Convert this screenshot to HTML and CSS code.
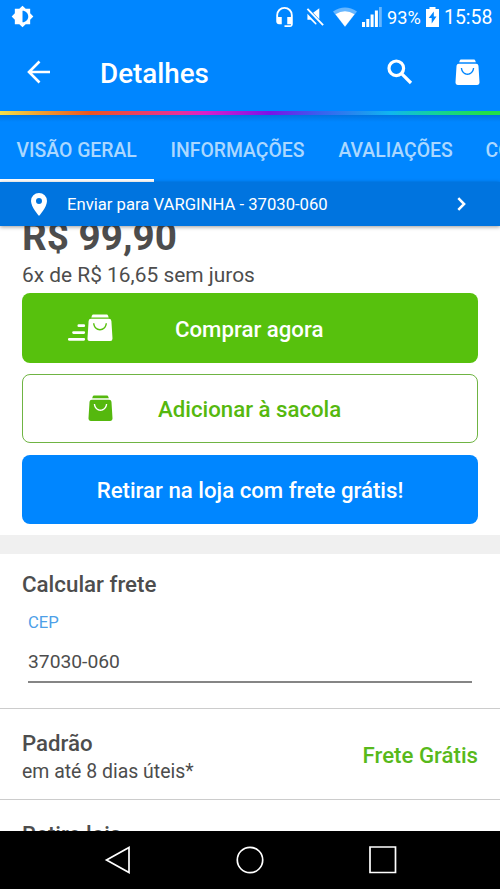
FILE: index.html
```html
<!DOCTYPE html>
<html lang="pt-BR">
<head>
<meta charset="utf-8">
<title>Detalhes</title>
<link rel="stylesheet" href="styles.css">
</head>
<body>
<svg class="defs" width="0" height="0">
  <symbol id="bag" viewBox="0 0 26 28">
    <path d="M4.300 3.400 5 1.400Q5.300.6 6.200.6h13.600Q20.700.6 21 1.400l.7 2z"/>
    <path fill-rule="evenodd" d="M4 4.800h18q2.200 0 2.400 2.200l1.100 17.500q.1 2.500-2.300 2.500H2.800q-2.400 0-2.300-2.500L1.600 7Q1.800 4.800 4 4.800zM6 9.300c.4 4.500 3.400 7.200 7 7.200s6.600-2.700 7-7.200h-1.400c-.4 3.600-2.700 5.700-5.600 5.700s-5.200-2.100-5.600-5.700z"/>
  </symbol>
</svg>
<div class="screen">
  <div class="status">
    <svg class="brightness" viewBox="0 0 24 24"><path fill-rule="evenodd" d="M20 15.310 23.310 12 20 8.690V4h-4.690L12 .69 8.690 4H4v4.690L.69 12 4 15.310V20h4.690L12 23.310 15.310 20H20v-4.690zM12 18V6c3.310 0 6 2.690 6 6s-2.690 6-6 6z"/></svg>
    <svg class="headset" viewBox="0 0 24 24"><path d="M12 1a9 9 0 0 0-9 9v7c0 1.660 1.340 3 3 3h3v-8H5v-2a7 7 0 0 1 14 0v2h-4v8h4v1h-7v2h6c1.660 0 3-1.340 3-3V10a9 9 0 0 0-9-9z"/></svg>
    <svg class="mute" viewBox="0 0 20 20"><path d="M1.500 6.500 11 16.600v.9l-1 .5-5-5H1.500zM7.500 5.500 14 .8v11.600z"/><path d="m1.500 1.500 16.500 17" class="slash"/></svg>
    <svg class="wifi" viewBox="0 0 24 20"><path d="M0 4.600Q12-3.800 24 4.600L12 20z" opacity=".4"/><path d="M2.500 7.300Q12 1.200 21.500 7.300L12 19.600z"/></svg>
    <svg class="signal" viewBox="0 0 20 20"><path d="M0 15h3v5H0zM4.300 12h3v8h-3zM8.600 7.500h3V20h-3zM12.900 3.500h3V20h-3z"/><path d="M17 0h2.800v20H17z" opacity=".4"/></svg>
    <span class="percent">93%</span>
    <svg class="battery" viewBox="0 0 13 20"><path fill-rule="evenodd" d="M3.500 0h6v2H13v18H0V2h3.500zM7.800 4.500 2.700 11h3v5.500l4.800-7H7.800z"/></svg>
    <span class="clock">15:58</span>
  </div>
  <div class="appbar">
    <svg class="back" viewBox="0 0 24 24"><path d="M12.500 1.500 2 12l10.500 10.500M2 12h21"/></svg>
    <h1>Detalhes</h1>
    <svg class="search" viewBox="0 0 26 26"><circle cx="9.300" cy="9.300" r="7.300"/><path d="m14.600 14.600 9.400 9.400"/></svg>
    <svg class="cart"><use href="#bag"/></svg>
  </div>
  <div class="rainbow"></div>
  <nav class="tabs">
    <span class="tab active">VISÃO GERAL</span><span class="tab info">INFORMAÇÕES</span><span class="tab rating">AVALIAÇÕES</span><span class="tab more">COMENTÁRIOS</span>
  </nav>
  <div class="ship">
    <svg class="pin" viewBox="0 0 16 23"><path fill-rule="evenodd" d="M8 0a8 8 0 0 0-8 8c0 6 8 15 8 15s8-9 8-15a8 8 0 0 0-8-8zm0 5a3 3 0 1 1 0 6 3 3 0 0 1 0-6z"/></svg>
    <span>Enviar para VARGINHA - 37030-060</span>
    <svg class="chevron" viewBox="0 0 9 14"><path d="m1.300 1.200 5.800 5.800-5.800 5.800"/></svg>
  </div>
  <main>
    <div class="price">R$ 99,90</div>
    <div class="installments">6x de R$ 16,65 sem juros</div>
    <div class="actions">
      <div class="button buy">
        <svg class="fast" viewBox="0 0 45 28"><path class="speed" d="M10.800 11.700h5M5.500 18.600h10.300M1.300 25.300h14.500"/><use href="#bag" x="19" y="0" width="26" height="28"/></svg>
        <span>Comprar agora</span>
      </div>
      <div class="button add">
        <svg class="addbag"><use href="#bag"/></svg>
        <span>Adicionar à sacola</span>
      </div>
      <div class="button pickup"><span>Retirar na loja com frete grátis!</span></div>
    </div>
    <section class="freight">
      <h2>Calcular frete</h2>
      <div class="field">
        <div class="label">CEP</div>
        <div class="value">37030-060</div>
      </div>
    </section>
    <div class="option">
      <div class="detail">
        <div class="name">Padrão</div>
        <div class="time">em até 8 dias úteis*</div>
      </div>
      <div class="free">Frete Grátis</div>
    </div>
    <div class="option next"><div class="name retire">Retire loja</div></div>
  </main>
  <footer>
    <svg viewBox="0 0 28 28"><path d="M25 1.500v25L2.500 14z"/></svg>
    <svg viewBox="0 0 28 28"><circle cx="14" cy="14" r="12.700"/></svg>
    <svg viewBox="0 0 28 28"><path d="M1 1h25.500v25.500H1z"/></svg>
  </footer>
</div>
</body>
</html>
```
FILE: styles.css
```css
* { box-sizing: border-box; }
body { margin: 0; font-family: Roboto, "Liberation Sans", sans-serif; color: #4d4d4d; background: #fff; }
h1, h2 { margin: 0; font-weight: 500; }
svg { display: block; flex: none; fill: currentColor; }
.defs { position: absolute; }
.screen { width: 500px; height: 889px; overflow: hidden; display: flex; flex-direction: column; white-space: nowrap; }
.screen > * { flex: none; }

.status { height: 34px; display: flex; align-items: center; background: #0086ff; color: #fff; padding-left: 11px; font-size: 19.440px; }
.brightness { width: 23px; height: 23px; margin-bottom: 1px; }
.headset { width: 23px; height: 22px; margin-left: 239px; margin-bottom: 1px; }
.mute { width: 19px; height: 20px; margin-left: 10px; }
.slash { fill: none; stroke: currentColor; stroke-width: 2; }
.wifi { width: 24px; height: 20px; margin-left: 8px; }
.signal { width: 20px; height: 20px; margin-left: 5px; }
.percent { margin-left: 5px; width: 34px; font-size: 18.200px; }
.battery { width: 13px; height: 20px; margin-left: 5px; }
.clock { margin-left: 5px; padding-top: 1px; }

.appbar { height: 77px; display: flex; align-items: center; background: #0086ff; color: #fff; padding-left: 27px; }
.appbar svg { margin-bottom: 1px; }
.back { width: 24px; height: 24px; fill: none; stroke: currentColor; stroke-width: 2.600; }
h1 { font-size: 27.780px; line-height: 34px; margin-left: 49px; width: 287px; padding-top: 2px; }
.search { width: 26px; height: 26px; fill: none; stroke: currentColor; stroke-width: 3.200; }
.cart { width: 25px; height: 27px; margin-left: 42px; }
.rainbow { height: 4px; background: linear-gradient(90deg, #f5e04a 0%, #f0a030 8%, #ea5520 18%, #e8309a 36%, #d91fcb 41%, #7a12e8 54%, #3a60ee 64%, #10b5f0 78%, #14d29a 87%, #22e048 97%); }
.tabs { height: 67px; display: flex; background: linear-gradient(#0074e2, #0086ff 7px); color: #abd8ff; font-size: 19.400px; font-weight: 500; line-height: 71px; overflow: hidden; }
.tab { height: 67px; flex: none; padding-left: 16.500px; }
.active { width: 154px; border-bottom: 3px solid #fff; }
.info { width: 168px; }
.rating { width: 147px; }
.ship { height: 44px; display: flex; align-items: center; background: #0074df; color: #fff; font-size: 16.670px; padding-left: 31px; box-shadow: 0 1px 4px rgba(0,0,0,.4); z-index: 1; }
.pin { width: 16px; height: 23px; }
.ship span { width: 390px; margin-left: 20px; line-height: 20px; padding-top: 1px; }
.chevron { width: 9px; height: 14px; fill: none; stroke: currentColor; stroke-width: 2.500; }

main { height: 605px; overflow: hidden; }
.price { height: 46px; margin: -13px 0 0 22px; line-height: 47px; font-weight: 700; font-size: 38.700px; }
.installments { height: 34px; padding-left: 22px; line-height: 32px; font-size: 20.900px; }
.actions { padding: 0 22px; display: flex; flex-direction: column; gap: 11px; height: 242px; }
.button { height: 70px; border-radius: 8px; display: flex; align-items: center; color: #fff; font-size: 22.220px; font-weight: 500; line-height: 28px; }
.button span { padding-top: 2px; }
.buy { background: #57c10d; }
.fast { width: 45px; height: 28px; margin-left: 46px; }
.speed { fill: none; stroke: currentColor; stroke-width: 2.700; stroke-linecap: round; }
.buy span { margin-left: 62px; }
.add { height: 69px; border: 1.500px solid #6fb443; color: #55b80e; }
.addbag { width: 25px; height: 27px; margin-left: 65px; }
.add span { margin-left: 45px; padding-top: 0; }
.pickup { background: #0086ff; justify-content: center; margin-top: 1px; height: 69px; }
.pickup span { padding-top: 0; }
.freight { height: 174px; padding: 19px 22px 0; border-top: 19px solid #f0f0f0; border-bottom: 1px solid #ccc; }
.freight h2 { height: 29px; line-height: 22px; font-size: 22.330px; }
.field { margin: 0 6px; height: 81px; border-bottom: 2px solid #858585; }
.label { height: 40px; line-height: 42px; font-size: 16.670px; color: #4d9fe8; }
.value { height: 38px; line-height: 39px; font-size: 19.250px; }
.option { height: 91px; padding: 0 22px; display: flex; justify-content: space-between; align-items: center; border-bottom: 1px solid #ccc; }
.detail { padding-top: 5px; }
.name { font-size: 22.220px; line-height: 30px; font-weight: 500; }
.time { font-size: 19.440px; line-height: 27px; }
.free { color: #58b91b; font-size: 22.220px; font-weight: 500; padding-top: 2px; }
.next { align-items: flex-start; }
.retire { padding-top: 19px; }
footer { height: 58px; background: #000; color: #fff; display: flex; align-items: center; justify-content: center; gap: 104.500px; }
footer svg { width: 28px; height: 28px; fill: none; stroke: currentColor; stroke-width: 1.700; }
```
